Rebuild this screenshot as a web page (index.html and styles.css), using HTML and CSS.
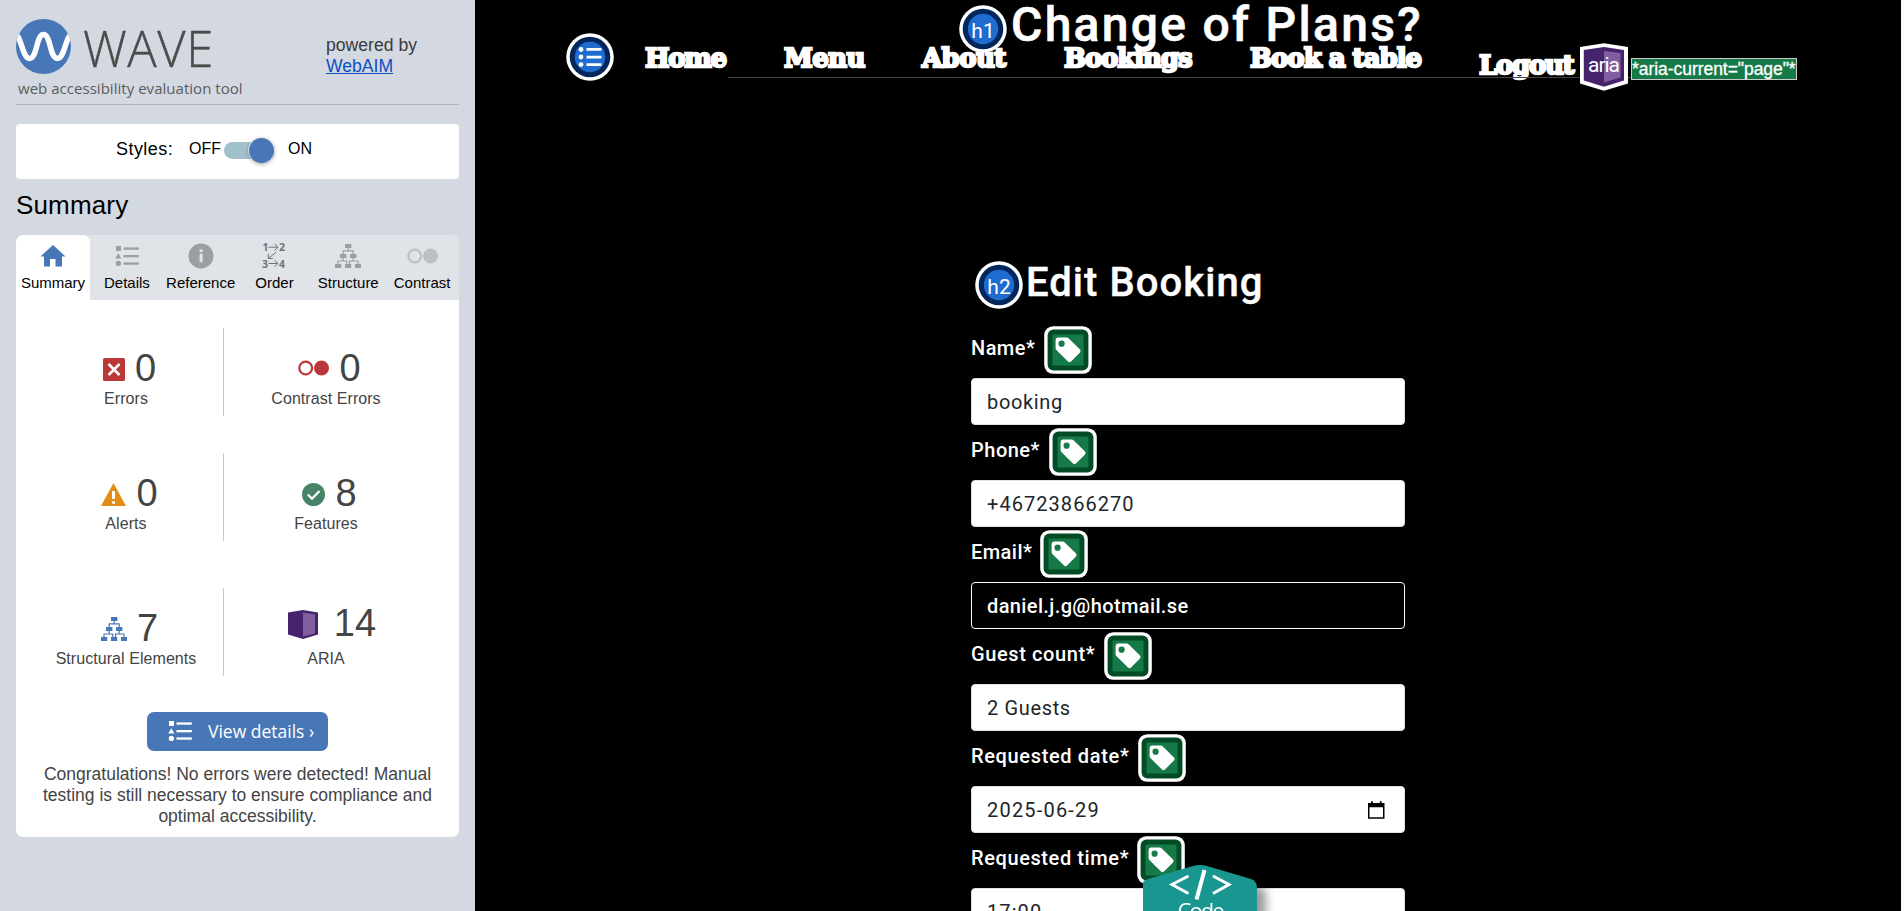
FILE: index.html
```html
<!DOCTYPE html>
<html lang="en">
<head>
<meta charset="utf-8">
<title>WAVE - Edit Booking</title>
<link rel="stylesheet" href="styles.css">
</head>
<body>
<svg class="defs" width="0" height="0">
  <defs>
    <symbol id="list" viewBox="0 0 24 20">
      <rect x="1" y="0" width="5" height="5"/><path d="M3.3 7.3L6.4 12.6H.2z"/><circle cx="3.4" cy="17.4" r="2.6"/>
      <rect x="8.5" y="1.4" width="15.3" height="2.3"/><rect x="8.5" y="9" width="15.3" height="2.3"/><rect x="8.5" y="16.4" width="15.3" height="2.3"/>
    </symbol>
    <symbol id="tree" viewBox="0 0 26 24">
      <rect x="10" y="0" width="6.4" height="4"/><rect x="5" y="10" width="6.4" height="4"/><rect x="15" y="10" width="6.4" height="4"/>
      <rect x="0" y="20" width="6.2" height="4"/><rect x="10" y="20" width="6.2" height="4"/><rect x="20" y="20" width="6" height="4"/>
      <path d="M13.2 4V7M8.2 10V6.8H18.2V10M8.2 14V17M18.2 14V17M3 20V17H11.8V20M14.6 20V17H23V20" fill="none" stroke="currentColor" stroke-width="1.2"/>
    </symbol>
    <symbol id="rings" viewBox="0 0 31 16">
      <circle cx="7.7" cy="8" r="6.4" fill="none" stroke="currentColor" stroke-width="2.2"/><circle cx="23.5" cy="8" r="7.5"/>
    </symbol>
    <symbol id="tag" viewBox="0 0 48 48">
      <rect x=".2" y=".2" width="47.6" height="47.6" rx="9" fill="#fff"/>
      <rect x="3.6" y="3.6" width="40.8" height="40.8" rx="6" fill="#024b25"/>
      <rect x="8.5" y="8.5" width="31" height="31" rx="1" fill="#167a48"/>
      <path d="M14 11.5H22.5Q23.8 11.5 24.8 12.5L36 23.5Q37.2 25 36 26.4L27 35.6Q25.5 37 24 35.6L12.6 24.3Q11.6 23.2 11.6 22V14Q11.6 11.5 14 11.5Z" fill="#fff"/>
      <circle cx="17.6" cy="17.7" r="3.1" fill="#167a48"/>
    </symbol>
    <symbol id="disc" viewBox="0 0 48 48">
      <circle cx="24" cy="24" r="23.8" fill="#fff"/><circle cx="24" cy="24" r="20.3" fill="#03275b"/><circle cx="24" cy="24" r="15.2" fill="#206bcf"/>
    </symbol>
  </defs>
</svg>
<div class="app">
  <aside class="sidebar">
    <header class="brand">
      <div class="brand-logo">
        <div class="brand-mark">
          <svg width="55" height="55" viewBox="0 0 55 55"><clipPath id="c"><circle cx="27.5" cy="27.5" r="27.5"/></clipPath><circle cx="27.5" cy="27.5" r="27.5" fill="#4877b7"/><path clip-path="url(#c)" d="M-1 16C5 14 6 39.500 13.500 39.500C21.500 39.500 20 15.500 27.500 15.500C35 15.500 33.500 39.500 41.500 39.500C49 39.500 50 14 56 16" fill="none" stroke="#fff" stroke-width="5.400"/></svg>
          <span class="brand-name">WAVE</span>
        </div>
        <div class="tagline">web accessibility evaluation tool</div>
      </div>
      <div class="powered">powered by<br><a href="#">WebAIM</a></div>
    </header>
    <div class="styles-box">
      <span class="styles-label">Styles:</span><span class="off">OFF</span><span class="track"><span class="knob"></span></span><span class="on">ON</span>
    </div>
    <h2 class="side-title">Summary</h2>
    <div class="tabs">
      <div class="tab active"><svg width="26" height="22" viewBox="0 0 26 22"><path d="M13 0L25.500 11.500H22V21.500H15.500V14H10V21.500H4V11.500H.5z"/></svg><span>Summary</span></div>
      <div class="tab"><svg width="24" height="20"><use href="#list"/></svg><span>Details</span></div>
      <div class="tab"><svg width="26" height="26" viewBox="0 0 26 26"><circle cx="13" cy="13" r="12.500"/><path d="M11.600 6.500h3v2.700h-3zM11.600 10.700h3v8.500h-3z" fill="#e0e3e8"/></svg><span>Reference</span></div>
      <div class="tab"><svg class="order" width="26" height="26" viewBox="0 0 26 26"><text x="1.500" y="8">1</text><text x="18" y="8">2</text><text x="1" y="24.500">3</text><text x="18" y="24.500">4</text><path d="M7.500 4.200H17M13.500 1L17 4.200L13.500 7.500M7.500 20.500H17M13.500 17.300L17 20.500L13.500 23.800M15.500 9L7.500 15.200M7.300 10.800V15.400H12"/></svg><span>Order</span></div>
      <div class="tab"><svg width="26" height="24"><use href="#tree"/></svg><span>Structure</span></div>
      <div class="tab pale"><svg width="31" height="16"><use href="#rings"/></svg><span>Contrast</span></div>
    </div>
    <section class="panel">
      <div class="stats">
        <div class="stat"><div class="figure"><svg width="22" height="23" viewBox="0 0 22 23"><rect width="22" height="23" rx="1.500" fill="#bb3838"/><path d="M5.500 6L16.500 17M16.500 6L5.500 17" stroke="#fff" stroke-width="2.600"/></svg><b>0</b></div><span>Errors</span></div>
        <div class="stat right"><div class="figure red"><svg width="31" height="16"><use href="#rings"/></svg><b>0</b></div><span>Contrast Errors</span></div>
        <div class="stat"><div class="figure low"><svg width="25" height="23" viewBox="0 0 25 23"><path d="M12.500 0L25 23H0z" fill="#e38e17"/><path d="M11 8h3v8h-3zM11 18.300h3v2.500h-3z" fill="#fff"/></svg><b>0</b></div><span>Alerts</span></div>
        <div class="stat right"><div class="figure low"><svg width="23" height="23" viewBox="0 0 23 23"><circle cx="11.500" cy="11.500" r="11.500" fill="#478366"/><path d="M5.800 11.500L10 15.700L17.500 8" fill="none" stroke="#fff" stroke-width="2.300"/></svg><b>8</b></div><span>Features</span></div>
        <div class="stat"><div class="figure low blue"><svg width="26" height="24"><use href="#tree"/></svg><b>7</b></div><span>Structural Elements</span></div>
        <div class="stat right"><div class="figure aria"><svg width="30" height="29" viewBox="0 0 30 29"><path d="M0 2.500L15 0L30 2.500V24.500L15 29L0 24.500z" fill="#45246d"/><path d="M15 2.500L27 4.500V23.500L15 26.500z" fill="#815e9f"/></svg><b>14</b></div><span>ARIA</span></div>
      </div>
      <button class="details"><svg width="24" height="20"><use href="#list"/></svg><span>View details ›</span></button>
      <p class="message">Congratulations! No errors were detected! Manual<br>testing is still necessary to ensure compliance and<br>optimal accessibility.</p>
    </section>
  </aside>

  <main class="page">
    <div class="title-row"><svg class="badge" width="48" height="48" viewBox="0 0 48 48"><use href="#disc"/><text x="24" y="33" text-anchor="middle">h1</text></svg><h1>Change of Plans?</h1></div>
    <nav class="nav">
      <div class="rule"></div>
      <svg class="nav-icon" width="48" height="48" viewBox="0 0 48 48"><use href="#disc"/><g fill="#fff"><circle cx="15" cy="16.500" r="2.400"/><circle cx="15" cy="24" r="2.400"/><circle cx="15" cy="31.600" r="2.400"/><path d="M20.500 15h15v2.800h-15zM20.500 22.700h15v2.800h-15zM20.500 30.300h15v2.800h-15z"/></g></svg>
      <a class="home">Home</a><a class="menu">Menu</a><a class="about">About</a><a class="bookings">Bookings</a><a class="book">Book a table</a><a class="logout">Logout</a>
      <svg class="nav-aria" width="48" height="48" viewBox="0 0 48 48"><path d="M0 4L24 .3L48 4V40.500L24 47.800L0 40.500z" fill="#fff"/><path d="M3.800 7L24 4L44 7V37.500L24 43.800L3.800 37.500z" fill="#45246d"/><path d="M24 8L40.500 10V34.500L24 39.500z" fill="#815e9f"/><text x="24" y="29" text-anchor="middle" textLength="32">aria</text></svg>
      <span class="current">*aria-current="page"*</span>
    </nav>
    <div class="sub-row"><svg class="badge" width="48" height="48" viewBox="0 0 48 48"><use href="#disc"/><text x="24" y="33" text-anchor="middle">h2</text></svg><h2>Edit Booking</h2></div>
    <form class="form">
      <div class="label"><span class="l1">Name*</span><svg width="48" height="48"><use href="#tag"/></svg></div>
      <div class="field"><span class="f1">booking</span></div>
      <div class="label"><span class="l2">Phone*</span><svg width="48" height="48"><use href="#tag"/></svg></div>
      <div class="field"><span class="f2">+46723866270</span></div>
      <div class="label"><span class="l3">Email*</span><svg width="48" height="48"><use href="#tag"/></svg></div>
      <div class="field dark"><span class="f3">daniel.j.g@hotmail.se</span></div>
      <div class="label"><span class="l4">Guest count*</span><svg width="48" height="48"><use href="#tag"/></svg></div>
      <div class="field"><span class="f4">2 Guests</span></div>
      <div class="label"><span class="l5">Requested date*</span><svg width="48" height="48"><use href="#tag"/></svg></div>
      <div class="field"><span class="f5">2025-06-29</span><svg width="17" height="18" viewBox="0 0 17 18"><path d="M0 2H3V.3H4.800V2H11.800V.3H13.600V2H16.500V17.700H0zM1.500 6.300V16.200H15V6.300z" fill="#000" fill-rule="evenodd"/></svg></div>
      <div class="label"><span class="l6">Requested time*</span><svg width="48" height="48"><use href="#tag"/></svg></div>
      <div class="field"><span class="f6">17:00</span></div>
    </form>
    <div class="code"><svg width="130" height="46" viewBox="0 0 130 46"><path d="M0 46V18Q0 15 5 14L50 1Q57 -1 64 1L108 14Q114 16 114 23V46z" fill="#18968f"/><path d="M45.500 11L29 19.500L45.500 28.500M70 11L86 19.500L70 28.500" fill="none" stroke="#fff" stroke-width="3"/><path d="M61.500 5L53.500 34.500" stroke="#fff" stroke-width="4"/><text x="34.500" y="53.500" textLength="47">Code</text></svg></div>
  </main>
</div>
</body>
</html>
```
FILE: styles.css
```css
* { box-sizing: border-box; }
body { margin: 0; overflow: hidden; font-family: "Liberation Sans", Arial, sans-serif; }
h1, h2, p { margin: 0; }
.defs { position: absolute; }
svg { display: block; flex: none; fill: currentColor; }
.app { display: flex; width: 1904px; height: 911px; overflow: hidden; }

.sidebar { flex: none; width: 475px; padding: 19px 16px 0; background: #d4d8e0; color: #000; }
.brand { display: flex; height: 86px; border-bottom: 1px solid #b2b6b7; }
.brand-logo { width: 310px; color: #4b4b4b; }
.brand-mark { display: flex; height: 58px; gap: 12px; }
.brand-name { font: 300 49px/59px "Open Sans", sans-serif; letter-spacing: .6px; -webkit-text-stroke: .4px #4b4b4b; }
.tagline { padding-left: 2px; font: 15px/22px "Open Sans", sans-serif; letter-spacing: .03px; white-space: nowrap; color: #5a5c5e; }
.powered { padding-top: 16px; font-size: 17.600px; line-height: 21px; color: #3a3a3a; }
.powered a { color: #0b50c5; }
.styles-box { display: flex; height: 55px; margin-top: 19px; padding-left: 100px; border-radius: 4px; background: #fff; font-size: 16px; line-height: 49px; }
.styles-label { width: 73px; font-size: 18px; line-height: 51px; letter-spacing: .45px; }
.off { width: 35px; }
.track { position: relative; width: 46px; height: 17px; margin-top: 18px; border-radius: 9px; background: #a0c0cb; }
.knob { position: absolute; left: 25px; top: -4px; width: 25px; height: 25px; border-radius: 50%; background: #4877b7; box-shadow: 0 1px 4px #0006, 0 0 0 1px #fff; }
.on { margin-left: 18px; }
.side-title { height: 56px; padding-top: 11px; font-size: 26px; line-height: 30px; font-weight: 400; letter-spacing: .15px; }
.tabs { display: flex; height: 65px; overflow: hidden; border-radius: 7px 7px 0 0; background: #e0e3e8; }
.tab { display: flex; flex: 1; flex-direction: column; align-items: center; font-size: 15px; color: #9b9fa1; }
.tab svg { margin: auto; transform: translateY(1px); }
.tab span { height: 25px; line-height: 16px; color: #000; }
.tab.active { flex: 0 0 74px; border-radius: 7px 7px 0 0; background: #fff; color: #4877b7; }
.tab.pale { color: #bcc0c4; }
.order { color: #6f7375; }
.order text { font: 700 10.500px "Open Sans", sans-serif; }
.order path { fill: none; stroke: currentColor; }
.panel { height: 537px; border-radius: 0 0 7px 7px; background: #fff; color: #444; }
.stats { display: grid; grid-template-columns: 208px 235px; grid-template-rows: 125px 135px 87px; padding-top: 28px; }
.stat { display: flex; flex-direction: column; align-items: center; height: 88px; padding: 21px 0 0 13px; border-right: 1px solid #c8c8c8; font-size: 16px; letter-spacing: .06px; }
.stat.right { padding: 21px 31px 0 0; border: 0; }
.figure { display: flex; align-items: center; gap: 10px; height: 38px; margin-bottom: 3px; padding-left: 7px; }
.figure b { font-size: 38px; font-weight: 400; line-height: 38px; color: #444; }
.figure svg { transform: translateY(1px); }
.figure.red { color: #bb3838; }
.figure.red svg { transform: none; }
.figure.blue svg { color: #4877b7; }
.aria { gap: 16px; padding-left: 12px; transform: translateY(-5px); }
.details { display: flex; align-items: center; gap: 16px; width: 181px; height: 39px; margin: 37px auto 13px 131px; padding: 0 0 2px 21px; border: 0; border-radius: 7px; background: #4877b7; color: #fff; font: 17.500px "Open Sans", sans-serif; white-space: nowrap; }
.message { font-size: 17.500px; line-height: 21px; text-align: center; white-space: nowrap; }

.page { position: relative; width: 1429px; overflow: hidden; border-right: 3px solid #fafafa; background: #000; color: #fff; font-family: Roboto, sans-serif; }
.title-row { display: flex; gap: 4px; height: 261px; padding: 5px 0 0 484px; }
.badge text, .nav-aria text { fill: #fff; font: 400 21px Roboto, sans-serif; }
h1 { font-size: 48px; font-weight: 500; line-height: 40px; letter-spacing: 2.300px; white-space: nowrap; -webkit-text-stroke: .6px #fff; }
.nav { position: absolute; top: 33px; left: 91px; display: flex; align-items: flex-start; height: 60px; font: 700 26px/50px "DejaVu Serif", serif; white-space: nowrap; }
.nav a { height: 48px; -webkit-text-stroke: 2.300px #fff; letter-spacing: -1.300px; }
.rule { position: absolute; left: 162px; top: 44px; width: 903px; height: 1px; background: #444; }
.home { width: 139px; margin-left: 31px; }
.nav .menu { width: 138px; letter-spacing: -.6px; }
.nav .about { width: 142px; letter-spacing: -.6px; }
.nav .bookings { width: 186px; letter-spacing: -1.100px; }
.nav .book { width: 229px; letter-spacing: -1px; }
.logout { width: 101px; padding-top: 7px; }
.nav-aria { position: relative; margin-top: 10px; }
.current { position: relative; width: 166px; height: 22px; margin: 25px 0 0 3px; border: 1px solid #ccc; background: #167a48; font: 17.500px/20px "Liberation Sans", sans-serif; letter-spacing: -.05px; -webkit-text-stroke: .3px #fff; }
.sub-row { display: flex; gap: 3px; height: 62px; padding-left: 500px; }
.sub-row h2 { font-size: 40px; font-weight: 500; line-height: 43px; letter-spacing: 1.050px; white-space: nowrap; -webkit-text-stroke: .4px #fff; }
.form { width: 434px; margin-left: 496px; font-size: 20px; }
.label { display: flex; align-items: flex-start; height: 55px; padding-top: 4px; font-weight: 500; line-height: 43px; white-space: nowrap; }
.label svg { margin-top: -1px; }
.field { display: flex; align-items: center; justify-content: space-between; height: 47px; padding: 0 19px 0 15px; border: 1px solid #dee2e6; border-radius: 4px; background: #fff; color: #212529; letter-spacing: .5px; }
.field.dark { border-color: #fff; background: #000; color: #fff; font-weight: 500; letter-spacing: .38px; }
.l1 { width: 73px; letter-spacing: .45px; }
.l2 { width: 78px; letter-spacing: .5px; }
.l3 { width: 69px; letter-spacing: .45px; }
.l4 { width: 133px; letter-spacing: .6px; }
.l5 { width: 167px; letter-spacing: .65px; }
.l6 { width: 166px; letter-spacing: .6px; }
.f1 { letter-spacing: .65px; }
.f2 { letter-spacing: 1.050px; }
.f4 { letter-spacing: .65px; }
.f5 { letter-spacing: 1.200px; }
.f6 { letter-spacing: 1.100px; }
.code { position: absolute; left: 668px; top: 865px; filter: drop-shadow(9px 8px 5px #0006); }
.code text { fill: #fff; font: 22px "Open Sans", sans-serif; }
```
